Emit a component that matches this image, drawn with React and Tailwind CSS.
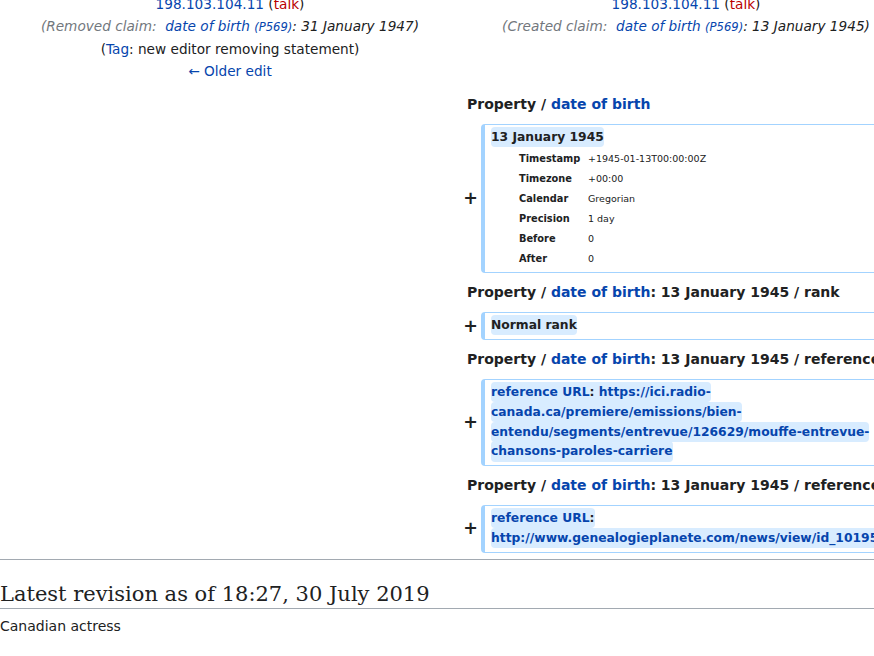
import React from "react";

const link = "text-[#0645ad]";

const timeRows = [
  ["Timestamp", "+1945-01-13T00:00:00Z"],
  ["Timezone", "+00:00"],
  ["Calendar", "Gregorian"],
  ["Precision", "1 day"],
  ["Before", "0"],
  ["After", "0"],
];

function Hl({ children, className = "" }) {
  return (
    <span className={`bg-[#d8ecff] rounded-[4px] py-[0.25em] box-decoration-clone font-bold ${className}`}>
      {children}
    </span>
  );
}

function LineNo({ children }) {
  return (
    <div className="h-[31px] flex items-center pl-[7px] font-bold text-[14px] whitespace-nowrap">
      <span>
        Property / <a className={link}>date of birth</a>
        {children}
      </span>
    </div>
  );
}

function Added({ children }) {
  return (
    <div className="flex">
      <div className="w-[21px] shrink-0 flex items-center justify-center font-bold text-[17.5px] leading-[1.2]">+</div>
      <div className="flex-1 min-w-0 border border-l-4 border-[#a3d3ff] rounded-[4px] py-[3px] px-[6px] text-[12.32px] leading-[1.6]">
        {children}
      </div>
    </div>
  );
}

export default function App() {
  return (
    <div className="w-[874px] h-[656px] overflow-hidden bg-white text-[#202122] font-['DejaVu_Sans',sans-serif]">
      <div className="-mt-[7px] w-[916px]">
        {/* revision headers */}
        <div className="flex gap-[4px] px-[4px] text-[13.65px] leading-[22px] text-center">
          <div className="w-[452px]">
            <div>
              <a className={link}>198.103.104.11</a> (<a className="text-[#ba0000]">talk</a>)
            </div>
            <div className="italic">
              <span className="text-[#72777d]">(Removed claim:&nbsp; </span>
              <a className={link}>
                date of birth <span className="text-[0.85em]">(P569)</span>
              </a>
              : 31 January 1947)
            </div>
            <div>
              (<a className={link}>Tag</a>: new editor removing statement)
            </div>
            <div>
              <a className={link}>← Older edit</a>
            </div>
          </div>
          <div className="w-[452px]">
            <div>
              <a className={link}>198.103.104.11</a> (<a className="text-[#ba0000]">talk</a>)
            </div>
            <div className="italic">
              <span className="text-[#72777d]">(Created claim:&nbsp; </span>
              <a className={link}>
                date of birth <span className="text-[0.85em]">(P569)</span>
              </a>
              : 13 January 1945)
            </div>
          </div>
        </div>

        {/* diff body */}
        <div className="flex mt-[7px]">
          <div className="w-[460px] shrink-0" />
          <div className="w-[452px] flex flex-col gap-[4px]">
            <LineNo />
            <Added>
              <div>
                <Hl>13 January 1945</Hl>
              </div>
              <div className="mt-[1px]">
                {timeRows.map(([k, v]) => (
                  <div key={k} className="h-[20px] leading-[20px] flex items-baseline pl-[28px]">
                    <div className="w-[69px] font-bold text-[9.8px]">{k}</div>
                    <div className="text-[9.5px]">{v}</div>
                  </div>
                ))}
              </div>
            </Added>

            <LineNo>: 13 January 1945 / rank</LineNo>
            <Added>
              <div className="py-[0.5px]">
                <Hl>Normal rank</Hl>
              </div>
            </Added>

            <LineNo>: 13 January 1945 / reference</LineNo>
            <Added>
              <Hl>
                <a className={link}>reference URL</a>: <a className={link}>https://ici.radio-canada.ca/premiere/emissions/bien-entendu/segments/entrevue/126629/mouffe-entrevue-chansons-paroles-carriere</a>
              </Hl>
            </Added>

            <LineNo>: 13 January 1945 / reference</LineNo>
            <Added>
              <Hl>
                <a className={link}>reference URL</a>:{" "}
                <a className={`${link} whitespace-nowrap`}>http://www.genealogieplanete.com/news/view/id_10195/mouffe-claudine-monfette</a>
              </Hl>
            </Added>
          </div>
        </div>
      </div>

      <div className="mt-[6px] border-t border-[#a2a9b1]" />

      <h2 className="mt-[21px] font-['DejaVu_Serif',serif] text-[21px] leading-[1.3] border-b border-[#a2a9b1]">
        Latest revision as of 18:27, 30 July 2019
      </h2>
      <div className="mt-[6px] text-[14px] leading-[22px]">Canadian actress</div>
    </div>
  );
}
